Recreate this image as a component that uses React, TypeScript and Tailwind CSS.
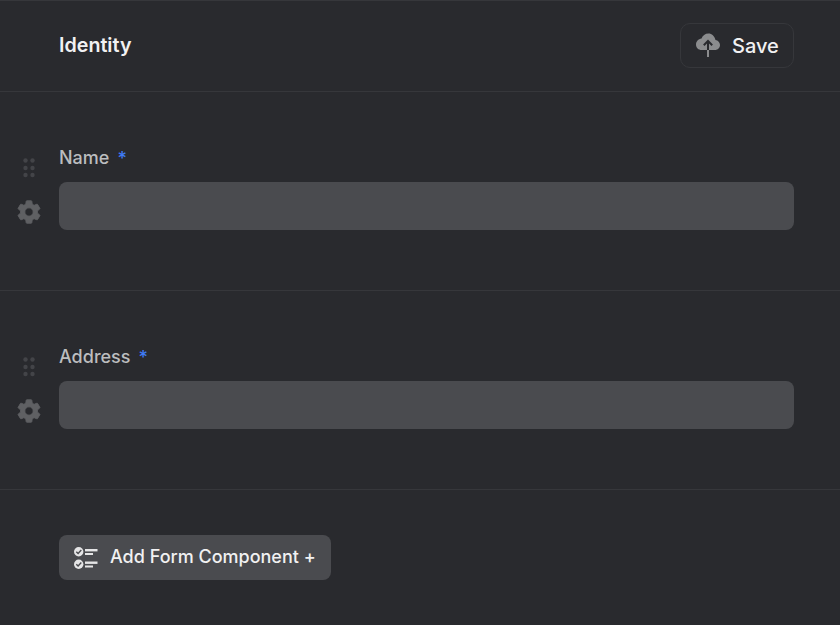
const FONT = "font-['Inter',sans-serif]"

const CloudUpload = () => (
  <svg width="24" height="24" viewBox="0 0 24 24" fill="none">
    <path
      d="M12.500 0.500c-3.300 0-6 2-7 5C2.300 6 0 8.500 0 11.500 0 14.800 2.500 17 5.500 17h13.500c2.800 0 5-2.200 5-5 0-2.600-2-4.700-4.500-5C18.500 3 15.800 0.500 12.500 0.500z"
      fill="#8b8c8e"
    />
    <path d="M12 8v9M7.800 12.200 12 8l4.200 4.200" stroke="#292a2e" strokeWidth="2" />
    <path d="M12 17v7" stroke="#8b8c8e" strokeWidth="2" />
  </svg>
)

const DragDots = () => (
  <svg width="12" height="20" viewBox="0 0 12 20" fill="#434448">
    <circle cx="2.500" cy="2.500" r="2.200" />
    <circle cx="9.500" cy="2.500" r="2.200" />
    <circle cx="2.500" cy="10" r="2.200" />
    <circle cx="9.500" cy="10" r="2.200" />
    <circle cx="2.500" cy="17" r="2.200" />
    <circle cx="9.500" cy="17" r="2.200" />
  </svg>
)

const Gear = () => (
  <svg width="28" height="28" viewBox="0 0 24 24" fill="#5f6063" stroke="#5f6063" strokeWidth="0.800" strokeLinejoin="round">
    <path d="M19.140 12.940c.04-.3.06-.61.06-.94 0-.32-.02-.64-.07-.94l2.030-1.580c.18-.14.23-.41.12-.61l-1.920-3.320c-.12-.22-.37-.29-.59-.22l-2.390.96c-.5-.38-1.030-.7-1.620-.94l-.36-2.540c-.04-.24-.24-.41-.48-.41h-3.840c-.24 0-.43.17-.47.41l-.36 2.540c-.59.24-1.130.57-1.620.94l-2.390-.96c-.22-.08-.47 0-.59.22L2.740 8.870c-.12.21-.08.47.12.61l2.030 1.580c-.05.3-.09.63-.09.94s.02.64.07.94l-2.030 1.580c-.18.14-.23.41-.12.61l1.920 3.320c.12.22.37.29.59.22l2.390-.96c.5.38 1.030.7 1.620.94l.36 2.540c.05.24.24.41.48.41h3.840c.24 0 .44-.17.47-.41l.36-2.540c.59-.24 1.130-.56 1.620-.94l2.390.96c.22.08.47 0 .59-.22l1.920-3.320c.12-.22.07-.47-.12-.61l-2.010-1.580zM12 15.600c-1.980 0-3.600-1.620-3.600-3.600s1.620-3.600 3.600-3.600 3.600 1.620 3.600 3.600-1.620 3.600-3.600 3.600z" />
  </svg>
)

const ChecklistIcon = () => (
  <svg width="24" height="24" viewBox="0 0 24 24" fill="none">
    <circle cx="4.700" cy="5.700" r="4.700" fill="#e5e5e6" />
    <circle cx="4.700" cy="18.200" r="4.700" fill="#e5e5e6" />
    <path d="M2.300 5.700l1.800 1.800 3.200-3.400M2.300 18.200l1.800 1.800 3.200-3.400" stroke="#4a4b4f" strokeWidth="1.400" />
    <rect x="11" y="3" width="12.500" height="2.400" fill="#e5e5e6" />
    <rect x="11" y="7" width="8" height="2" fill="#e5e5e6" />
    <rect x="11" y="15.500" width="12.500" height="2.400" fill="#e5e5e6" />
    <rect x="11" y="19.500" width="8" height="2" fill="#e5e5e6" />
  </svg>
)

const Field = ({ label }: { label: string }) => (
  <section className="flex h-[199px] border-b border-[#36373b]">
    <div className="flex w-[59px] flex-col items-center pt-[66px] pr-[1px]">
      <DragDots />
      <div className="mt-[20px]">
        <Gear />
      </div>
    </div>
    <div className="flex-1 pt-[56px] pr-[46px]">
      <label className="flex h-5 items-center text-[18px] leading-5 font-medium text-[#bcbdbf]">
        {label}
        <span className="mt-[2px] ml-2 text-[#3f7bf6]">*</span>
      </label>
      <div className="mt-[14px] h-12 rounded-lg bg-[#4a4b4f]" />
    </div>
  </section>
)

export default function App() {
  return (
    <div className={`${FONT} h-[625px] w-[840px] overflow-hidden border-t border-[#36373b] bg-[#292a2e]`}>
      <header className="flex h-[91px] items-center justify-between border-b border-[#36373b] pr-[46px] pl-[59px]">
        <h2 className="text-[19.7px] font-semibold text-[#f1f1f2]">Identity</h2>
        <button className="mb-[2px] flex h-[45px] w-[114px] items-center gap-[12px] rounded-[10px] border border-[#36373b] pl-[15px] text-[20px] font-medium text-[#f1f1f2]">
          <CloudUpload />
          <span className="mt-[2px]">Save</span>
        </button>
      </header>
      <Field label="Name" />
      <Field label="Address" />
      <div className="pt-[45px] pl-[59px]">
        <button className="flex h-[45px] w-[272px] items-center gap-[12px] rounded-lg bg-[#4a4b4f] pl-[15px] text-[18px] font-medium text-[#f1f1f2]">
          <ChecklistIcon />
          <span className="mb-[2px]">Add Form Component +</span>
        </button>
      </div>
    </div>
  )
}
